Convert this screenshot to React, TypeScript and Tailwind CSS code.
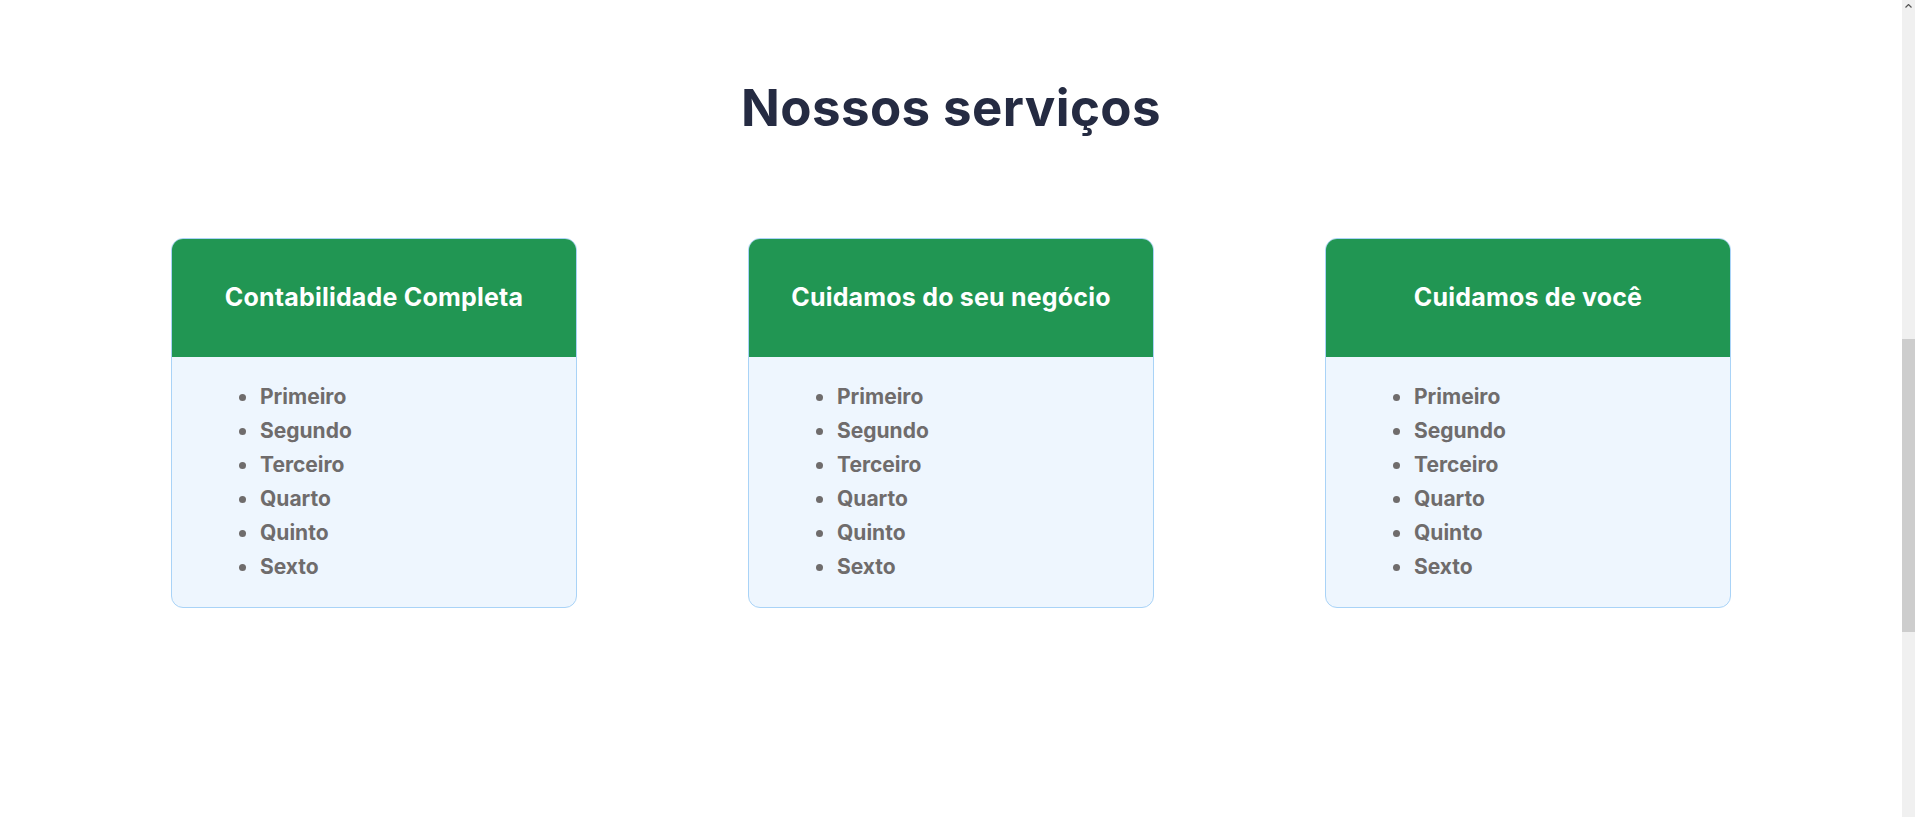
import React from 'react';

const services = [
  { title: 'Contabilidade Completa' },
  { title: 'Cuidamos do seu negócio' },
  { title: 'Cuidamos de você' },
];

const items = ['Primeiro', 'Segundo', 'Terceiro', 'Quarto', 'Quinto', 'Sexto'];

function ServiceCard({ title }: { title: string }) {
  return (
    <div className="w-[406px] rounded-xl border border-[#a9d3f7] bg-[#eef6fe] overflow-hidden">
      {/* Header */}
      <div className="h-[118px] bg-[#219653] flex items-center justify-center">
        <h3 className="text-[25px] font-bold text-white tracking-[0.2px]">{title}</h3>
      </div>
      {/* List */}
      <ul className="list-disc pl-[87px] pt-[23px] pb-[23px] text-[21px] font-bold leading-[34px] text-[#6f6c6c] marker:text-[#6f6c6c]">
        {items.map((item) => (
          <li key={item} className="pl-[1px]">{item}</li>
        ))}
      </ul>
    </div>
  );
}

export default function App() {
  return (
    <div className="flex h-[817px] overflow-hidden bg-white" style={{ fontFamily: 'Inter, "Open Sans", sans-serif' }}>
      <section className="w-[1902px] shrink-0 pt-[77px]">
        <h2 className="text-center text-[51px] font-bold leading-[1.2] text-[#252b42] tracking-[0.4px]">
          Nossos serviços
        </h2>
        <div className="flex justify-evenly mt-[100px]">
          {services.map((s) => (
            <ServiceCard key={s.title} title={s.title} />
          ))}
        </div>
      </section>
      {/* Browser scrollbar */}
      <div className="w-[13px] shrink-0 bg-[#f0f0f0] flex flex-col">
        <div className="h-[12px] flex items-center justify-center">
          <svg width="7" height="4" viewBox="0 0 7 4">
            <path d="M0.5 3.5 L3.5 0.5 L6.5 3.5" fill="none" stroke="#555" strokeWidth="1.2" />
          </svg>
        </div>
        <div className="mt-[327px] h-[293px] bg-[#cdcdcd]" />
      </div>
    </div>
  );
}
